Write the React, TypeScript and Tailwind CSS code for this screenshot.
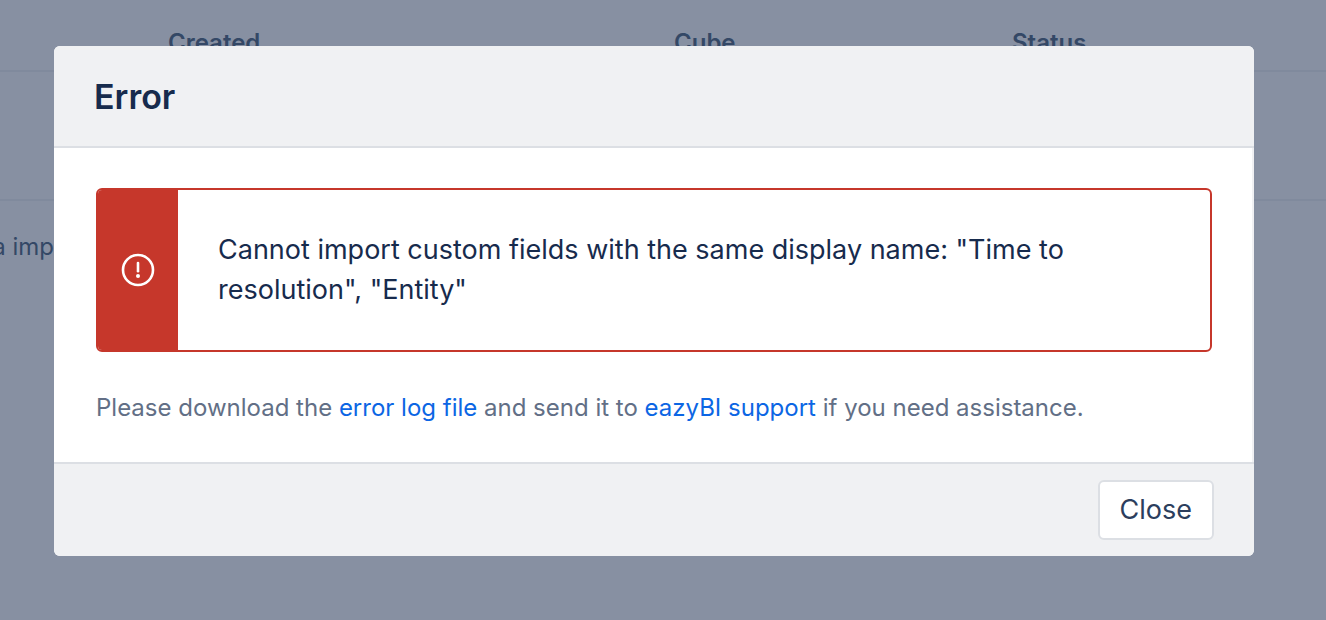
import React from 'react';

const columns = [
  { label: '', width: 'w-40' },
  { label: 'Created', width: 'w-[506px]' },
  { label: 'Cube', width: 'w-[338px]' },
  { label: 'Status', width: 'w-auto' },
];

function ErrorIcon() {
  return (
    <svg width="34" height="34" viewBox="0 0 34 34" fill="none" aria-hidden="true">
      <circle cx="17" cy="17" r="15" stroke="#fff" strokeWidth="2.6" />
      <path d="M17 10v8.2" stroke="#fff" strokeWidth="2.6" strokeLinecap="round" />
      <circle cx="17" cy="23" r="2" fill="#fff" />
    </svg>
  );
}

function ImportsTable() {
  return (
    <table className="w-full table-fixed text-2xl text-[#344866]">
      <thead>
        <tr className="h-[71px] border-b-2 border-[#808a9d]">
          {columns.map((col, i) => (
            <th key={i} className={`${col.width} pt-4 pl-2 text-left font-semibold`}>
              {col.label}
            </th>
          ))}
        </tr>
      </thead>
      <tbody>
        <tr className="h-[129px] border-b-2 border-[#808a9d]">
          <td colSpan={4} />
        </tr>
        <tr className="h-[92px]">
          <td colSpan={4}>
            <div className="flex w-[54px] justify-end whitespace-nowrap">a imp</div>
          </td>
        </tr>
      </tbody>
    </table>
  );
}

export default function App() {
  return (
    <div className="min-h-screen bg-[#8790a2] font-['Inter',sans-serif]">
      <ImportsTable />

      <div className="fixed inset-0 pt-[46px] pr-[72px] pl-[54px]">
        <div
          role="dialog"
          aria-modal="true"
          aria-labelledby="dialog-title"
          className="overflow-hidden rounded-md bg-white"
        >
          <header className="border-b-2 border-[#dcdfe4] bg-[#f0f1f3] px-10 pt-[29px] pb-[27px]">
            <h2 id="dialog-title" className="text-[34px] leading-[44px] font-semibold text-[#172b4d]">
              Error
            </h2>
          </header>

          <div className="border-r-2 border-[#f0f1f3] pt-10 pr-10 pb-[34px] pl-[42px]">
            <div role="alert" className="flex overflow-hidden rounded-md border-2 border-[#c6372b]">
              <div className="flex w-20 shrink-0 items-center justify-center bg-[#c6372b]">
                <ErrorIcon />
              </div>
              <p className="p-10 text-[27px] leading-10 text-[#172b4d]">
                Cannot import custom fields with the same display name: "Time to resolution", "Entity"
              </p>
            </div>
            <p className="mt-9 text-2xl leading-10 text-[#626f86]">
              Please download the{' '}
              <a href="#log" className="text-[#0c66e4]">error log file</a> and send it to{' '}
              <a href="#support" className="text-[#0c66e4]">eazyBI support</a> if you need assistance.
            </p>
          </div>

          <footer className="flex justify-end border-t-2 border-[#dcdfe4] bg-[#f0f1f3] px-10 py-4">
            <button
              type="button"
              className="h-[60px] rounded-md border-2 border-[#dcdfe4] bg-white px-5 text-[27px] leading-10 text-[#2c3e5d]"
            >
              Close
            </button>
          </footer>
        </div>
      </div>
    </div>
  );
}
